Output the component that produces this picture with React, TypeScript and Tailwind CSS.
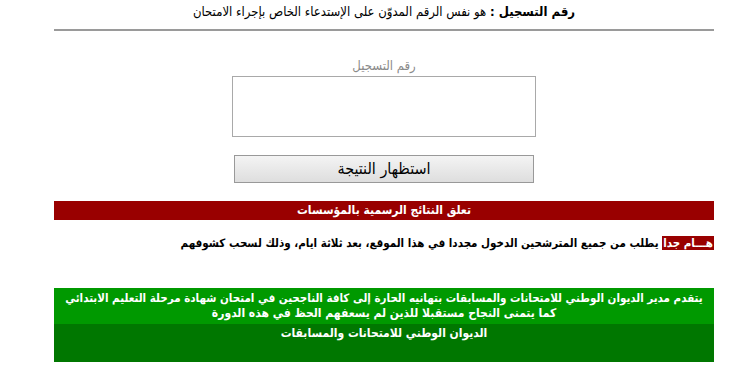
import React from "react";

export default function App() {
  return (
    <div
      dir="rtl"
      className="min-h-[365px] w-[754px] bg-white text-black"
      style={{ fontFamily: '"DejaVu Sans Condensed", "DejaVu Sans", sans-serif' }}
    >
      <div className="mr-[40px] w-[660px]">
        {/* Registration note */}
        <div className="pt-[3px] text-center text-[13px] leading-[18px]">
          <b>رقم التسجيل :</b> هو نفس الرقم المدوّن على الإستدعاء الخاص بإجراء الامتحان
        </div>
        <div className="mt-[8px] h-[2px] bg-[#9a9a9a]" />

        {/* Form */}
        <div className="flex flex-col items-center">
          <label className="mt-[27px] text-[13px] leading-[16px] text-[#8a8a8a]">
            رقم التسجيل
          </label>
          <textarea className="mt-[2px] h-[61px] w-[304px] resize-none border border-[#a9a9a9] bg-white outline-none" />
          <button className="mt-[18px] h-[28px] w-[300px] border border-[#999] bg-gradient-to-b from-[#f4f4f4] to-[#dedede] text-[16px] leading-[20px] text-black">
            استظهار النتيجة
          </button>
        </div>

        {/* Red notice */}
        <div className="mt-[18px] h-[19px] bg-[#990000] text-center text-[12px] font-bold leading-[19px] text-white">
          تعلق النتائج الرسمية بالمؤسسات
        </div>

        <div className="mt-[14px] text-[11.5px] font-bold leading-[18px]">
          <span className="bg-[#990000] px-[1px] text-white">هـــام جدا</span> يطلب من جميع المترشحين الدخول مجددا في هذا الموقع، بعد ثلاثة ايام، وذلك لسحب كشوفهم
        </div>

        {/* Green message */}
        <div className="mt-[36px] text-center font-bold text-white">
          <div className="h-[36px] bg-[#009900] pt-[3px]">
            <div className="whitespace-nowrap text-[11.5px] leading-[15px]">
              يتقدم مدير الديوان الوطني للامتحانات والمسابقات بتهانيه الحارة إلى كافة الناجحين في امتحان شهادة مرحلة التعليم الابتدائي
            </div>
            <div className="text-[12px] leading-[15px]">
              كما يتمنى النجاح مستقبلا للذين لم يسعفهم الحظ في هذه الدورة
            </div>
          </div>
          <div className="h-[38px] bg-[#007700] pt-[2px] text-[12px] leading-[15px]">
            الديوان الوطني للامتحانات والمسابقات
          </div>
        </div>
      </div>
    </div>
  );
}
